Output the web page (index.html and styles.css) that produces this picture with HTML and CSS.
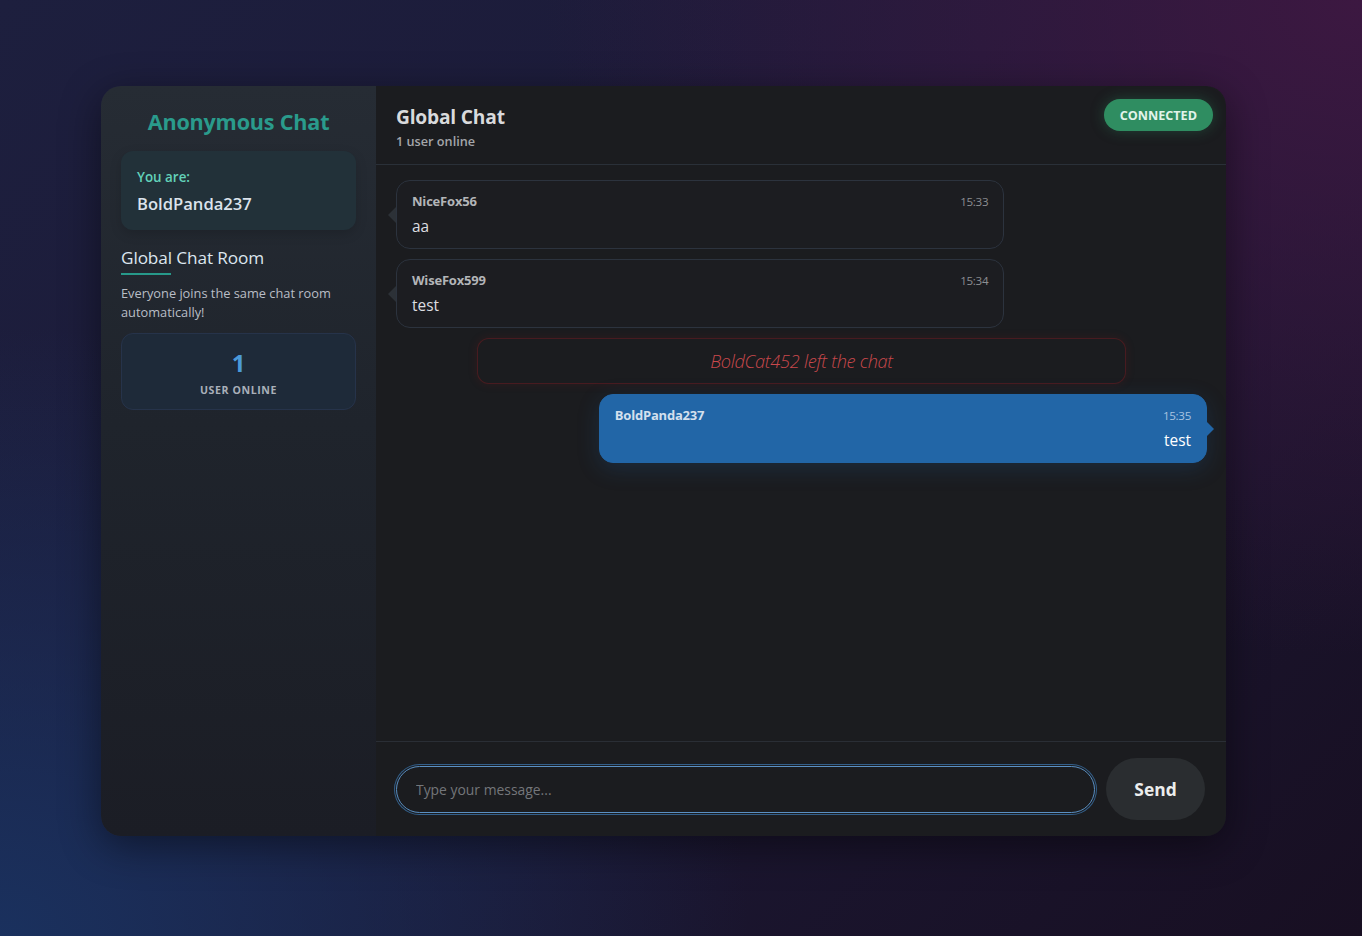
FILE: index.html
```html
<!DOCTYPE html>
<html lang="en">
<head>
<meta charset="utf-8">
<title>Anonymous Chat</title>
<link rel="stylesheet" href="styles.css">
</head>
<body>
<div class="app">
  <aside class="sidebar">
    <h1 class="brand">Anonymous Chat</h1>
    <div class="me-card">
      <div class="me-label">You are:</div>
      <div class="me-name">BoldPanda237</div>
    </div>
    <h3 class="room-title">Global Chat Room</h3>
    <p class="room-desc">Everyone joins the same chat room automatically!</p>
    <div class="online-card">
      <div class="online-count">1</div>
      <div class="online-label">USER ONLINE</div>
    </div>
  </aside>
  <main class="chat">
    <header class="chat-header">
      <h2 class="chat-title">Global Chat</h2>
      <div class="chat-sub">1 user online</div>
      <span class="status">CONNECTED</span>
    </header>
    <section class="messages">
      <div class="msg other">
        <div class="msg-meta"><span class="msg-name">NiceFox56</span><span class="msg-time">15:33</span></div>
        <div class="msg-text">aa</div>
      </div>
      <div class="msg other">
        <div class="msg-meta"><span class="msg-name">WiseFox599</span><span class="msg-time">15:34</span></div>
        <div class="msg-text">test</div>
      </div>
      <div class="system">BoldCat452 left the chat</div>
      <div class="msg mine">
        <div class="msg-meta"><span class="msg-name">BoldPanda237</span><span class="msg-time">15:35</span></div>
        <div class="msg-text">test</div>
      </div>
    </section>
    <footer class="composer">
      <input class="composer-input" type="text" placeholder="Type your message...">
      <button class="send-btn">Send</button>
    </footer>
  </main>
</div>
</body>
</html>
```
FILE: styles.css
```css
* { box-sizing: border-box; }
html, body { height: 100%; }
body {
  margin: 0;
  padding: 86px 0 0 101px;
  font-family: "Open Sans", "Noto Sans", sans-serif;
  background:
    radial-gradient(ellipse 60% 70% at 100% 0%, rgba(62, 24, 66, 0.95) 0%, rgba(62, 24, 66, 0) 100%),
    radial-gradient(ellipse 55% 65% at 0% 100%, rgba(26, 50, 96, 0.95) 0%, rgba(26, 50, 96, 0) 100%),
    linear-gradient(135deg, #1d1f3e 0%, #1c1a38 45%, #180f22 100%);
}
.app {
  width: 1125px;
  height: 750px;
  display: flex;
  border-radius: 20px;
  overflow: hidden;
  box-shadow: 0 10px 40px rgba(0, 0, 0, 0.45);
}
.sidebar {
  width: 275px;
  flex: none;
  padding: 20px;
  background: linear-gradient(180deg, #262c34 0%, #1f242c 45%, #1b1d25 100%);
  color: #dfe5ec;
}
.brand {
  margin: 0 0 13px;
  font-size: 21.6px;
  line-height: 32px;
  font-weight: 700;
  text-align: center;
  color: #2a9b8c;
  letter-spacing: -0.2px;
}
.me-card {
  background: #223139;
  border-radius: 12px;
  padding: 16px 16px 14px;
  box-shadow: 0 4px 12px rgba(0, 0, 0, 0.15);
}
.me-label {
  font-size: 13.4px;
  line-height: 20px;
  font-weight: 600;
  color: #62d2b9;
}
.me-name {
  margin-top: 5px;
  font-size: 16.6px;
  line-height: 24px;
  font-weight: 600;
  color: #dbe3ec;
}
.room-title {
  position: relative;
  display: inline-block;
  margin: 16px 0 0;
  padding-bottom: 4px;
  font-size: 17.2px;
  line-height: 24px;
  font-weight: 500;
  color: #dde6ef;
  letter-spacing: -0.1px;
}
.room-title::after {
  content: "";
  position: absolute;
  left: 0;
  bottom: -1px;
  width: 50px;
  height: 2px;
  background: #27998a;
}
.room-desc {
  margin: 10px 0 11px;
  font-size: 12.8px;
  line-height: 19px;
  color: #b9bec6;
}
.online-card {
  background: #1e2a39;
  border: 1px solid #26334a;
  border-radius: 12px;
  padding: 15px 10px 11px;
  text-align: center;
}
.online-count {
  font-size: 24px;
  line-height: 28px;
  font-weight: 700;
  color: #4b9ad9;
}
.online-label {
  margin-top: 5px;
  font-size: 10.6px;
  line-height: 16px;
  font-weight: 700;
  letter-spacing: 0.6px;
  color: #a9b0b9;
}
.chat {
  flex: 1;
  display: flex;
  flex-direction: column;
  background: #1b1c1f;
  min-width: 0;
}
.chat-header {
  position: relative;
  padding: 17px 20px 14px;
  border-bottom: 1px solid #2a3038;
}
.chat-title {
  margin: 0 0 2px;
  font-size: 19.2px;
  line-height: 27px;
  font-weight: 700;
  color: #d9dadc;
  letter-spacing: -0.2px;
}
.chat-sub {
  font-size: 12.7px;
  line-height: 18px;
  font-weight: 600;
  color: #a4a6aa;
}
.status {
  position: absolute;
  top: 13px;
  right: 13px;
  height: 32px;
  padding: 0 16px;
  display: flex;
  align-items: center;
  border-radius: 16px;
  background: #2f8d61;
  color: #e2f4ea;
  font-size: 12.6px;
  font-weight: 700;
  box-shadow: 0 0 14px rgba(47, 141, 97, 0.35);
}
.messages {
  flex: 1;
  display: flex;
  flex-direction: column;
  gap: 10px;
  padding: 15px 19px 15px 20px;
  overflow: hidden;
}
.msg {
  position: relative;
  width: 75%;
  padding: 11px 15px 10px;
  border-radius: 14px;
}
.msg::before {
  content: "";
  position: absolute;
  top: 50%;
  margin-top: -8px;
  border-top: 8px solid transparent;
  border-bottom: 8px solid transparent;
}
.msg.other {
  align-self: flex-start;
  background: #1c1d21;
  border: 1px solid #2c333e;
}
.msg.other::before {
  left: -9px;
  border-right: 8px solid #2c3137;
}
.msg.mine {
  align-self: flex-end;
  background: #2266a7;
  border: 1px solid #2266a7;
  box-shadow: 0 6px 22px rgba(34, 102, 167, 0.22);
}
.msg.mine::before {
  right: -8px;
  border-left: 8px solid #2266a7;
}
.msg-meta {
  display: flex;
  justify-content: space-between;
  align-items: center;
  height: 18px;
}
.msg-name {
  font-size: 13px;
  font-weight: 700;
  color: #b3b5b8;
  letter-spacing: -0.2px;
}
.msg-time {
  font-size: 11.6px;
  color: #8c8e92;
  letter-spacing: -0.3px;
}
.msg-text {
  margin-top: 6px;
  font-size: 15.4px;
  line-height: 22px;
  color: #dcdde0;
}
.mine .msg-name { color: #d3e0ee; }
.mine .msg-time { color: #a9c4e0; }
.mine .msg-text { text-align: right; color: #ffffff; }
.system {
  align-self: center;
  width: 80%;
  padding: 11px 20px;
  border-radius: 12px;
  border: 1px solid rgba(110, 28, 32, 0.55);
  background: #1b1c1f;
  box-shadow: 0 0 10px rgba(140, 30, 30, 0.18);
  text-align: center;
  font-size: 18.2px;
  line-height: 22px;
  font-style: italic;
  font-weight: 300;
  color: #c9484c;
  letter-spacing: -0.3px;
}
.composer {
  display: flex;
  align-items: center;
  gap: 11px;
  padding: 16px 21px 16px 20px;
  border-top: 1px solid #2a2e35;
}
.composer-input {
  flex: 1;
  height: 47px;
  padding: 0 19px;
  border-radius: 24px;
  border: 1px solid #5a8fc2;
  background: #1b1c1f;
  box-shadow: 0 0 0 1px #1b1c1f, 0 0 0 2px #335f8a;
  outline: none;
  font-family: inherit;
  font-size: 13.9px;
  color: #dcdde0;
}
.composer-input::placeholder { color: #74767a; }
.send-btn {
  width: 99px;
  height: 62px;
  flex: none;
  border: none;
  border-radius: 31px;
  background: #2a2d30;
  color: #eceded;
  font-family: inherit;
  font-size: 17.4px;
  font-weight: 700;
}
```
